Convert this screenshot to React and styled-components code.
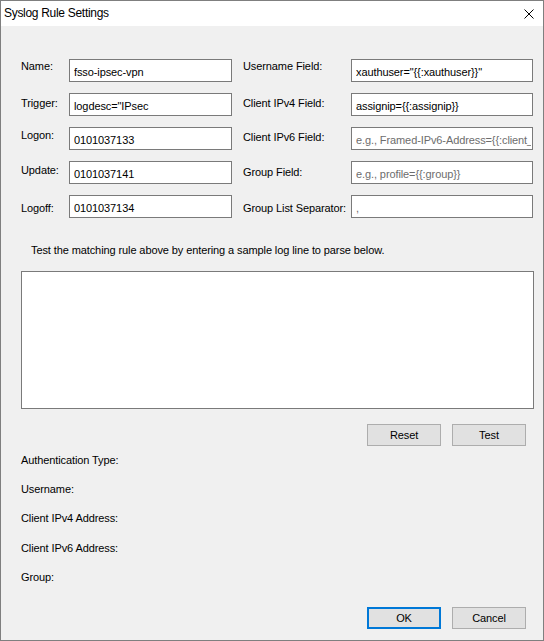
import React from "react";
import styled, { createGlobalStyle } from "styled-components";

const GlobalStyle = createGlobalStyle`
  html, body { margin: 0; padding: 0; background: #ffffff; }
  body { font-family: "Liberation Sans", Arial, sans-serif; color: #000; }
  * { box-sizing: border-box; }
`;

const Window = styled.div`
  width: 544px;
  height: 641px;
  border: 1px solid #7f7f7f;
  background: #f0f0f0;
  display: flex;
  flex-direction: column;
`;

const TitleBar = styled.div`
  height: 25px;
  flex: none;
  background: #ffffff;
  display: flex;
  align-items: center;
  justify-content: space-between;
  padding: 0 9px 0 3px;
`;

const Title = styled.span`
  font-size: 12px;
  line-height: 25px;
  letter-spacing: -0.3px;
  color: #000;
`;

const CloseButton = styled.button`
  width: 10px;
  height: 10px;
  padding: 0;
  border: none;
  background: transparent;
  display: flex;
  svg { display: block; }
`;

const Body = styled.div`
  display: flex;
  flex-direction: column;
  padding-top: 33px;
`;

const Form = styled.div`
  display: flex;
  gap: 11px;
  padding-left: 20px;
`;

const Column = styled.div`
  display: flex;
  flex-direction: column;
  gap: 11px;
`;

const Row = styled.div`
  display: grid;
  grid-template-columns: ${(p) => p.$labelWidth}px ${(p) => p.$inputWidth}px;
  height: 23px;
`;

const Label = styled.label`
  font-size: 11px;
  line-height: 15px;
  letter-spacing: -0.1px;
  white-space: nowrap;
  margin-top: ${(p) => p.$dy}px;
`;

const TextInput = styled.input`
  height: 23px;
  width: 100%;
  border: 1px solid #7a7a7a;
  background: #ffffff;
  padding: 2px 1px 0 4px;
  margin: 0;
  font-family: "Liberation Sans", Arial, sans-serif;
  font-size: 11px;
  line-height: 15px;
  letter-spacing: -0.1px;
  color: #000;
  outline: none;
  &::placeholder { color: #6d6d6d; opacity: 1; }
`;

const Hint = styled.div`
  margin: 25px 0 0 30px;
  font-size: 11px;
  line-height: 15px;
  letter-spacing: -0.1px;
`;

const SampleArea = styled.textarea`
  margin: 13px 0 0 20px;
  width: 513px;
  height: 138px;
  border: 1px solid #7a7a7a;
  background: #ffffff;
  resize: none;
  outline: none;
  font-family: "Liberation Sans", Arial, sans-serif;
  font-size: 11px;
`;

const ButtonRow = styled.div`
  display: flex;
  justify-content: flex-end;
  gap: 11px;
  padding-right: 17px;
  margin-top: ${(p) => p.$top}px;
`;

const Button = styled.button`
  width: 74px;
  height: 22px;
  padding: 0;
  margin: 0;
  background: #e1e1e1;
  border: ${(p) => (p.$primary ? "2px solid #0078d7" : "1px solid #adadad")};
  font-family: "Liberation Sans", Arial, sans-serif;
  font-size: 11px;
  letter-spacing: -0.1px;
  color: #000;
`;

const Results = styled.div`
  display: flex;
  flex-direction: column;
  gap: 14.2px;
  margin-top: 7px;
  padding-left: 20px;
`;

const ResultLabel = styled.div`
  font-size: 11px;
  line-height: 15px;
  letter-spacing: -0.1px;
`;

const leftFields = [
  { label: "Name:", value: "fsso-ipsec-vpn", dy: 0 },
  { label: "Trigger:", value: 'logdesc="IPsec', dy: 3 },
  { label: "Logon:", value: "0101037133", dy: 1 },
  { label: "Update:", value: "0101037141", dy: 2 },
  { label: "Logoff:", value: "0101037134", dy: 6 },
];

const rightFields = [
  { label: "Username Field:", value: 'xauthuser="{{:xauthuser}}"', dy: 0 },
  { label: "Client IPv4 Field:", value: "assignip={{:assignip}}", dy: 3 },
  { label: "Client IPv6 Field:", placeholder: "e.g., Framed-IPv6-Address={{:client_ip}}", dy: 3 },
  { label: "Group Field:", placeholder: "e.g., profile={{:group}}", dy: 4 },
  { label: "Group List Separator:", placeholder: ",", dy: 6 },
];

const results = [
  "Authentication Type:",
  "Username:",
  "Client IPv4 Address:",
  "Client IPv6 Address:",
  "Group:",
];

function Field({ f, labelWidth, inputWidth }) {
  return (
    <Row $labelWidth={labelWidth} $inputWidth={inputWidth}>
      <Label $dy={f.dy}>{f.label}</Label>
      <TextInput defaultValue={f.value} placeholder={f.placeholder} />
    </Row>
  );
}

export default function App() {
  return (
    <>
      <GlobalStyle />
      <Window>
        <TitleBar>
          <Title>Syslog Rule Settings</Title>
          <CloseButton aria-label="Close">
            <svg width="10" height="10" viewBox="0 0 10 10">
              <path d="M0.5 0.5 L9.5 9.5 M9.5 0.5 L0.5 9.5" stroke="#000" strokeWidth="1" fill="none" />
            </svg>
          </CloseButton>
        </TitleBar>
        <Body>
          <Form>
            <Column>
              {leftFields.map((f) => (
                <Field key={f.label} f={f} labelWidth={48} inputWidth={163} />
              ))}
            </Column>
            <Column>
              {rightFields.map((f) => (
                <Field key={f.label} f={f} labelWidth={108} inputWidth={182} />
              ))}
            </Column>
          </Form>
          <Hint>Test the matching rule above by entering a sample log line to parse below.</Hint>
          <SampleArea />
          <ButtonRow $top={15}>
            <Button>Reset</Button>
            <Button>Test</Button>
          </ButtonRow>
          <Results>
            {results.map((r) => (
              <ResultLabel key={r}>{r}</ResultLabel>
            ))}
          </Results>
          <ButtonRow $top={22}>
            <Button $primary>OK</Button>
            <Button>Cancel</Button>
          </ButtonRow>
        </Body>
      </Window>
    </>
  );
}
